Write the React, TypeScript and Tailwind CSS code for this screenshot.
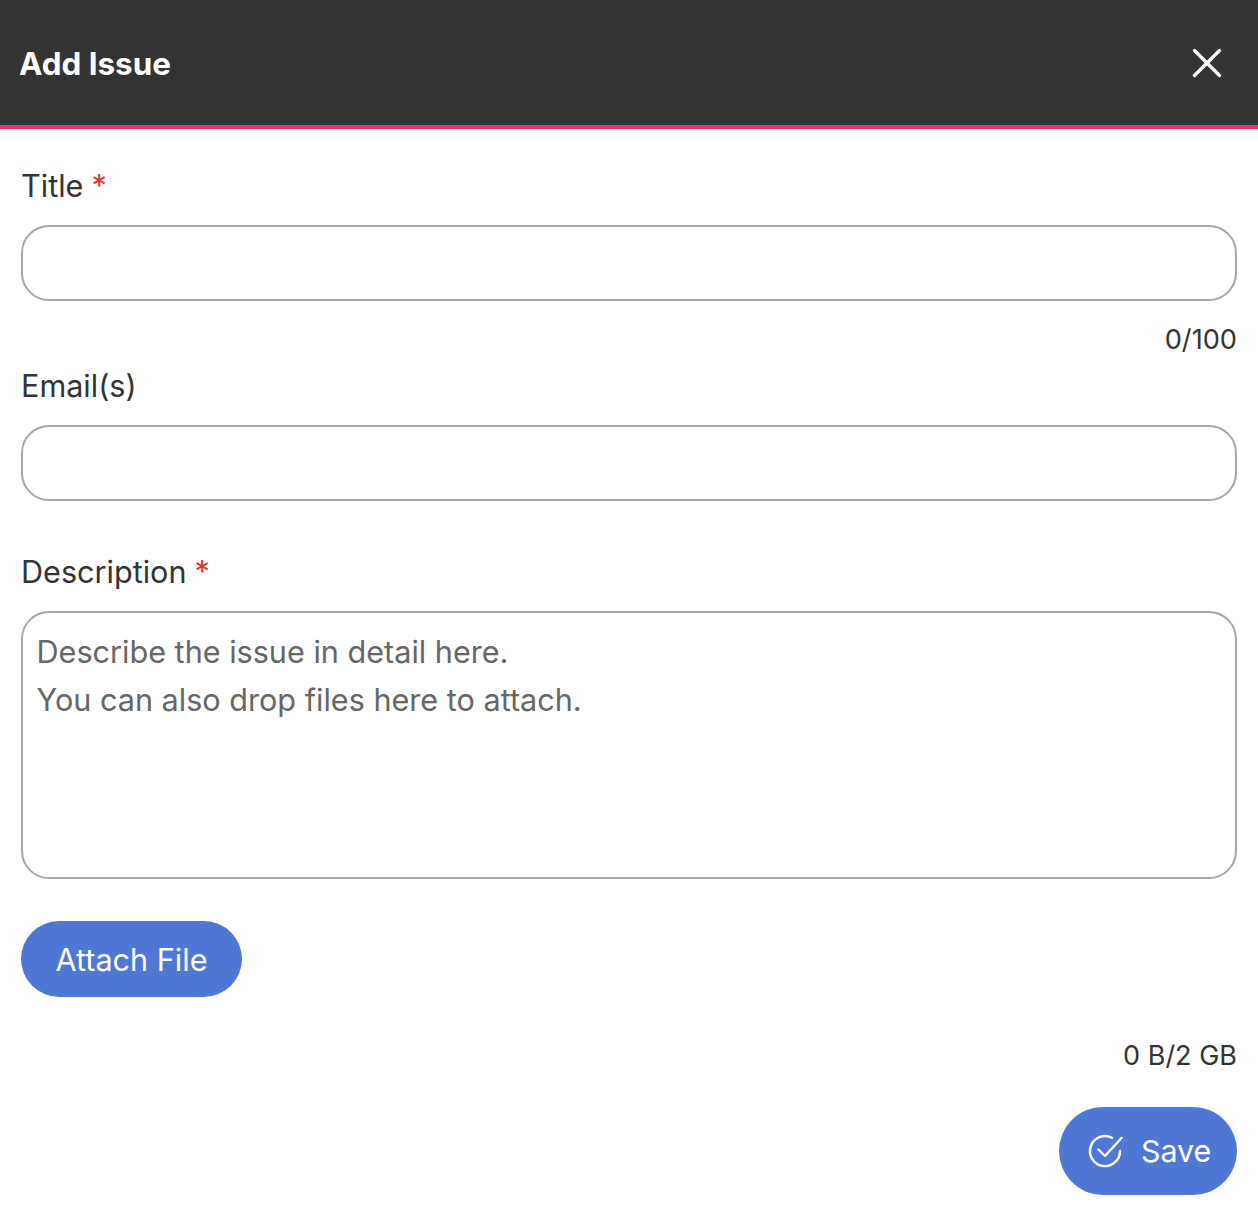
import { X } from 'lucide-react';

const labelClass = 'block text-[30.6px] leading-[44px] text-[#333333]';
const fieldClass =
  'block w-full rounded-[28px] border-2 border-[#a6a6a6] bg-white outline-none';

function Required() {
  return <span className="ml-[8px] text-[#e8302a]">*</span>;
}

export default function App() {
  return (
    <div className="min-h-[1212px] bg-white font-['Inter',sans-serif] text-[#333333]">
      {/* Header */}
      <header className="flex h-[129px] items-center justify-between border-b-4 border-[#ee2e7c] bg-[#333333] pl-[19px] pr-[26px]">
        <h1 className="pt-[5px] text-[31.4px] font-bold text-white">Add Issue</h1>
        <button className="text-white">
          <X size={50} strokeWidth={1.6} />
        </button>
      </header>

      <main className="px-[21px]">
        {/* Title */}
        <label className={`${labelClass} mt-[35px]`}>
          Title
          <Required />
        </label>
        <input type="text" className={`${fieldClass} mt-[17px] h-[76px]`} />
        <p className="mt-[20px] text-right text-[27.2px] leading-[38px]">0/100</p>

        {/* Emails */}
        <label className={`${labelClass} mt-[5px]`}>Email(s)</label>
        <input type="text" className={`${fieldClass} mt-[17px] h-[76px]`} />

        {/* Description */}
        <label className={`${labelClass} mt-[49px]`}>
          Description
          <Required />
        </label>
        <textarea
          className={`${fieldClass} mt-[17px] h-[268px] resize-none px-[13.5px] py-[15px] text-[30.6px] leading-[48px] placeholder:text-[#666666]`}
          placeholder={'Describe the issue in detail here.\nYou can also drop files here to attach.'}
        />

        <button className="mt-[42px] block h-[76px] w-[221px] rounded-full bg-[#4f77d4] pt-[2px] text-[30.6px] text-white">
          Attach File
        </button>

        <p className="mt-[40px] text-right text-[27px] leading-[38px]">0 B/2 GB</p>

        <div className="mt-[32px] flex justify-end">
          <button className="flex h-[88px] w-[178px] items-center gap-[18px] rounded-full bg-[#4f77d4] pl-[28px] text-[30.4px] text-white">
            <svg width="36" height="36" viewBox="0 0 36 36" fill="none" stroke="currentColor" strokeWidth="2.4" strokeLinecap="round" strokeLinejoin="round">
              <path d="M33 18a15 15 0 1 1-8-13.2" />
              <path d="M11.5 16.5l6.5 6.5L34.5 5" />
            </svg>
            <span className="pt-[2px]">Save</span>
          </button>
        </div>
      </main>
    </div>
  );
}
